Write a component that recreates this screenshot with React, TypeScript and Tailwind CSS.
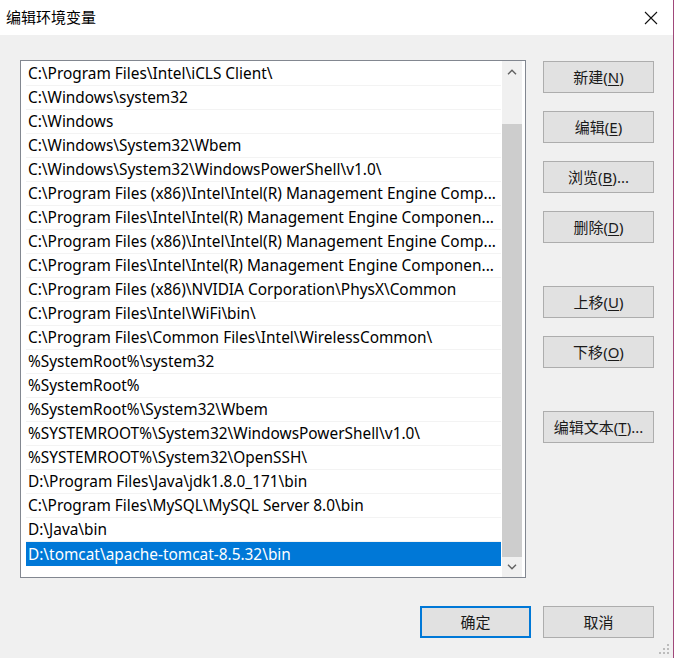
import React from "react";

const rows = [
  "C:\\Program Files\\Intel\\iCLS Client\\",
  "C:\\Windows\\system32",
  "C:\\Windows",
  "C:\\Windows\\System32\\Wbem",
  "C:\\Windows\\System32\\WindowsPowerShell\\v1.0\\",
  "C:\\Program Files (x86)\\Intel\\Intel(R) Management Engine Comp...",
  "C:\\Program Files\\Intel\\Intel(R) Management Engine Componen...",
  "C:\\Program Files (x86)\\Intel\\Intel(R) Management Engine Comp...",
  "C:\\Program Files\\Intel\\Intel(R) Management Engine Componen...",
  "C:\\Program Files (x86)\\NVIDIA Corporation\\PhysX\\Common",
  "C:\\Program Files\\Intel\\WiFi\\bin\\",
  "C:\\Program Files\\Common Files\\Intel\\WirelessCommon\\",
  "%SystemRoot%\\system32",
  "%SystemRoot%",
  "%SystemRoot%\\System32\\Wbem",
  "%SYSTEMROOT%\\System32\\WindowsPowerShell\\v1.0\\",
  "%SYSTEMROOT%\\System32\\OpenSSH\\",
  "D:\\Program Files\\Java\\jdk1.8.0_171\\bin",
  "C:\\Program Files\\MySQL\\MySQL Server 8.0\\bin",
  "D:\\Java\\bin",
  "D:\\tomcat\\apache-tomcat-8.5.32\\bin",
];

const font = { fontFamily: '"Segoe UI", "Noto Sans", "Noto Sans CJK SC", sans-serif' };

function Btn({
  label,
  hot,
  suffix = "",
  className = "",
  primary = false,
}: {
  label: string;
  hot?: string;
  suffix?: string;
  className?: string;
  primary?: boolean;
}) {
  return (
    <div
      className={
        "w-[111px] h-[32px] flex items-center justify-center bg-[#e1e1e1] text-[15px] text-[#1a1a1a] " +
        (primary ? "border-2 border-[#0078d7] " : "border border-[#adadad] ") +
        className
      }
    >
      <span>
        {label}
        {hot ? (
          <>
            (<span className="underline underline-offset-2">{hot}</span>)
          </>
        ) : null}
        {suffix}
      </span>
    </div>
  );
}

function Chevron({ up }: { up: boolean }) {
  return (
    <svg width="10" height="6" viewBox="0 0 10 6">
      <path
        d={up ? "M1 5.2 L5 1.2 L9 5.2" : "M1 0.8 L5 4.8 L9 0.8"}
        fill="none"
        stroke="#606060"
        strokeWidth="1.4"
      />
    </svg>
  );
}

export default function App() {
  return (
    <div
      className="w-[674px] h-[658px] bg-[#f0f0f0] flex flex-col border-r border-[#a0487a] relative overflow-hidden"
      style={font}
    >
      <div className="h-[35px] bg-white flex items-center justify-between pl-[6px] pr-[14px] shrink-0">
        <span className="text-[15px] text-black" style={{ fontFamily: '"Noto Sans CJK SC", sans-serif' }}>
          编辑环境变量
        </span>
        <svg width="16" height="16" viewBox="0 0 16 16">
          <path d="M2 2 L14 14 M14 2 L2 14" stroke="#111" strokeWidth="1.1" />
        </svg>
      </div>
      <div className="flex pl-[20px] pt-[25px]">
        <div className="w-[506px] h-[518px] bg-white border border-[#828790] flex pl-[5px] pr-[3px] py-[0px]">
          <div className="w-[475px] pt-[1px] flex flex-col">
            {rows.map((r, i) => {
              const sel = i === rows.length - 1;
              return (
                <div
                  key={i}
                  className={
                    "h-[24px] shrink-0 flex items-center pl-[2px] pt-[1px] whitespace-nowrap overflow-hidden text-[15.4px] " +
                    (sel ? "bg-[#0078d7] text-white" : "text-black border-b border-[#f3f3f3]")
                  }
                >
                  {r}
                </div>
              );
            })}
          </div>
          <div className="ml-[1px] w-[20px] h-full bg-[#f0f0f0] flex flex-col">
            <div className="h-[22px] flex items-center justify-center shrink-0">
              <Chevron up />
            </div>
            <div className="h-[41px] shrink-0" />
            <div className="h-[433px] bg-[#cdcdcd] shrink-0" />
            <div className="flex-1 flex items-center justify-center">
              <Chevron up={false} />
            </div>
          </div>
        </div>
        <div className="ml-[17px] flex flex-col pt-[1px]">
          <Btn label="新建" hot="N" />
          <Btn label="编辑" hot="E" className="mt-[18px]" />
          <Btn label="浏览" hot="B" suffix="..." className="mt-[18px]" />
          <Btn label="删除" hot="D" className="mt-[18px]" />
          <Btn label="上移" hot="U" className="mt-[43px]" />
          <Btn label="下移" hot="O" className="mt-[18px]" />
          <Btn label="编辑文本" hot="T" suffix="..." className="mt-[43px]" />
        </div>
      </div>
      <div className="flex justify-end pr-[19px] mt-[28px] gap-[12px]">
        <Btn label="确定" primary className="w-[110px]" />
        <Btn label="取消" />
      </div>
      <svg className="absolute right-[3px] bottom-[3px]" width="12" height="12" viewBox="0 0 12 12">
        {[
          [10, 2],
          [10, 6],
          [6, 6],
          [10, 10],
          [6, 10],
          [2, 10],
        ].map(([x, y], i) => (
          <rect key={i} x={x - 1} y={y - 1} width="2" height="2" fill="#bcbcbc" />
        ))}
      </svg>
    </div>
  );
}
